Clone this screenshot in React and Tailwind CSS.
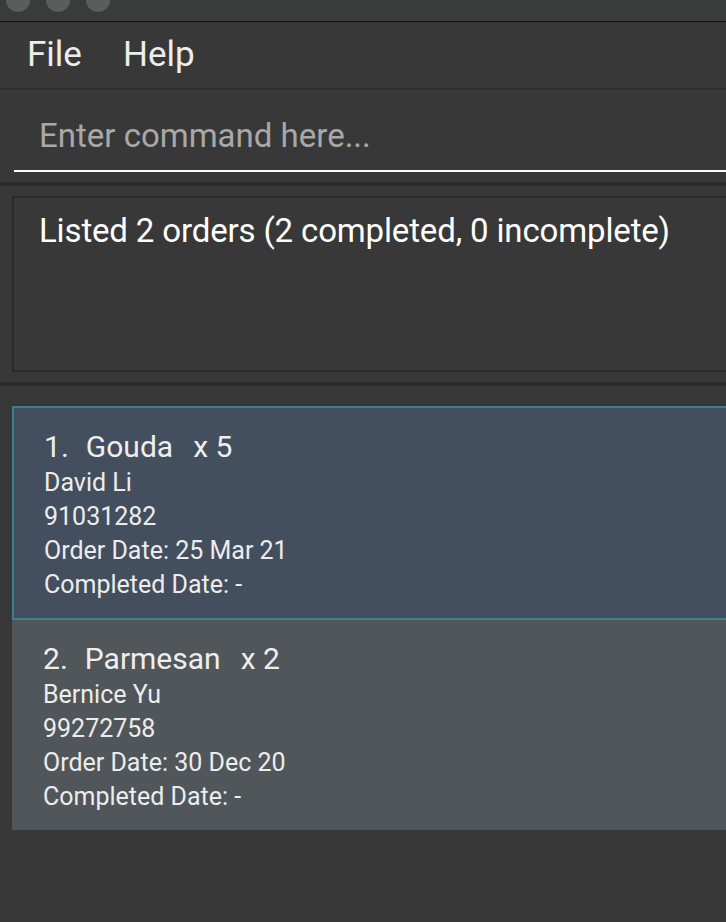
const orders = [
  { idx: 1, item: 'Gouda', qty: 5, name: 'David Li', phone: '91031282', date: '25 Mar 21', done: '-', selected: true },
  { idx: 2, item: 'Parmesan', qty: 2, name: 'Bernice Yu', phone: '99272758', date: '30 Dec 20', done: '-', selected: false },
];

function OrderCard({ order }) {
  const box = order.selected
    ? 'bg-[#434e5f] border-2 border-r-0 border-[#3b7f92] pt-[20px] pb-[16px] pl-[30px]'
    : 'bg-[#51565a] pt-[20px] pb-[16px] pl-[31px]';
  return (
    <div className={'ml-[12px] ' + box}>
      <div className="flex items-center h-[36px] text-[30px] text-[#eeeeee]">
        <span>{order.idx}.</span>
        <span className="ml-[17px]">{order.item}</span>
        <span className="ml-[20px]">x {order.qty}</span>
      </div>
      <div className="pt-[2px] text-[25px] leading-[34px] text-[#ececec]">
        <div>{order.name}</div>
        <div>{order.phone}</div>
        <div>Order Date: {order.date}</div>
        <div>Completed Date: {order.done}</div>
      </div>
    </div>
  );
}

export default function App() {
  return (
    <div className="w-full h-[922px] overflow-hidden bg-[#383838] flex flex-col" style={{ fontFamily: 'Roboto, "Noto Sans", sans-serif' }}>
      <div className="h-[21px] shrink-0 bg-[#3a3b3b] flex gap-[16px] pl-[6px] overflow-hidden">
        <div className="w-[24px] h-[24px] -mt-[12px] rounded-full bg-[#5b5c5c]" />
        <div className="w-[24px] h-[24px] -mt-[12px] rounded-full bg-[#5b5c5c]" />
        <div className="w-[24px] h-[24px] -mt-[12px] rounded-full bg-[#5b5c5c]" />
      </div>
      <div className="h-px shrink-0 bg-[#141414]" />

      <div className="h-[68px] shrink-0 flex items-center pl-[27px] text-[35px] text-[#ededed] border-b-2 border-[#2e2e2e]">
        <span>File</span>
        <span className="ml-[41px]">Help</span>
      </div>

      <div className="h-[92px] shrink-0 pt-[10px] bg-[#383838]">
        <div className="ml-[14px] h-[72px] border-b-2 border-white flex items-center pl-[25px] pt-[2px] text-[33px] text-[#a8a8a8]">
          Enter command here...
        </div>
      </div>
      <div className="h-[4px] shrink-0 bg-[#2b2b2b]" />

      <div className="h-[196px] shrink-0 pt-[10px]">
        <div className="ml-[12px] h-[176px] border-2 border-r-0 border-[#2b2b2b] pl-[25px] pt-[11px] text-[33px] leading-[44px] tracking-[-0.15px] text-white">
          Listed 2 orders (2 completed, 0 incomplete)
        </div>
      </div>
      <div className="h-[4px] shrink-0 bg-[#2b2b2b]" />

      <div className="pt-[20px] flex flex-col">
        {orders.map(o => (
          <OrderCard key={o.idx} order={o} />
        ))}
      </div>
    </div>
  );
}
